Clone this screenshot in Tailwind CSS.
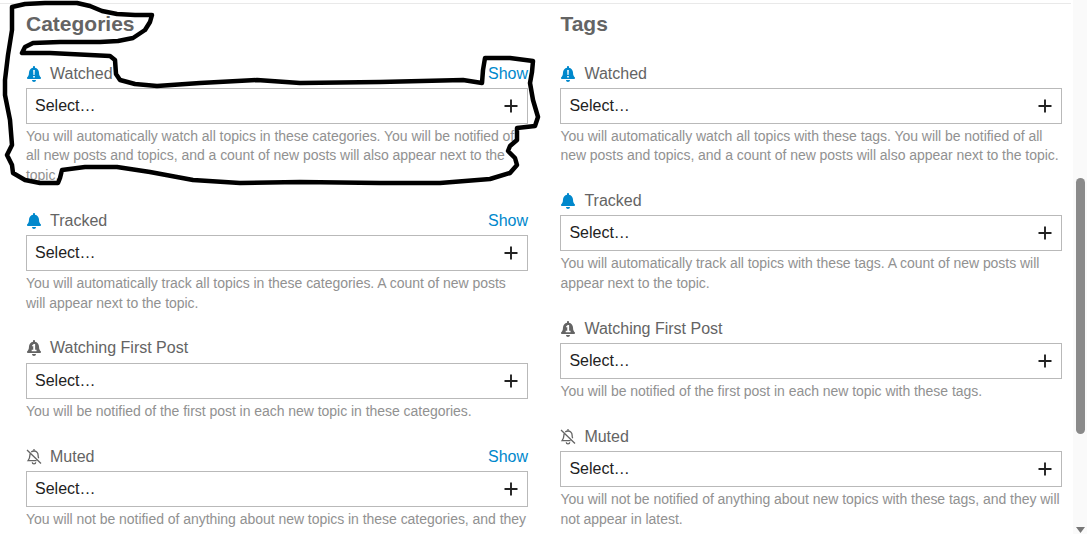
<!DOCTYPE html>
<html>
<head>
<meta charset="utf-8">
<script src="https://cdn.jsdelivr.net/npm/@tailwindcss/browser@4"></script>
</head>
<body class="bg-white font-['Liberation_Sans',Arial,sans-serif]">
<div class="relative flex h-[534px] w-[1087px] overflow-hidden">
  <svg class="hidden"><defs>
    <path id="bell" d="M224 512c35.320 0 63.970-28.650 63.970-64H160.030c0 35.350 28.650 64 63.970 64zm215.390-149.710c-19.320-20.760-55.470-51.990-55.470-154.290 0-77.700-54.480-139.900-127.940-155.160V32c0-17.670-14.320-32-31.980-32s-31.980 14.330-31.980 32v20.840C118.560 68.100 64.080 130.300 64.080 208c0 102.300-36.150 133.530-55.470 154.290-6 6.450-8.660 14.160-8.610 21.710.11 16.400 12.980 32 32.100 32h383.800c19.120 0 32-15.600 32.100-32 .05-7.550-2.610-15.270-8.610-21.710z"/>
    <path id="plus" d="M7 .5v13M.5 7h13"/>
  </defs></svg>
  <main class="min-w-0 flex-1 overflow-hidden">
    <div class="mt-[3px] h-px w-[1071px] bg-[#e9e9e9]"></div>
    <div class="flex gap-[32.4px] pl-[26px] pt-[8px]">
      <section class="w-[502px] shrink-0">
        <h2 class="h-[24px] text-[21px] font-bold leading-[24px] text-[#646464]">Categories</h2>
        <div class="mt-[26.6px]">
          <div class="mb-[24.2px]">
            <div class="flex h-[22.4px] items-center justify-between text-[16px] text-[#646464]"><span class="flex items-center"><svg class="mr-[9px] ml-[1px] h-[16px] w-[14px] text-[#0088cc]" viewBox="0 0 448 512" fill="currentColor"><use href="#bell"/><path d="M198 125h52l-8 165h-36zM198 320h52v50h-52z" fill="#fff"/></svg>Watched</span><span class="text-[#0088cc]">Show</span></div>
            <div class="mt-[2.8px] flex h-[36px] items-center justify-between border border-[#b9b9b9] px-[8px] text-[16px] text-[#222222]"><span>Select…</span><svg class="mr-[1px] h-[14px] w-[14px]" viewBox="0 0 14 14" fill="none" stroke="#222" stroke-width="1.900"><use href="#plus"/></svg></div>
            <p class="mt-[3px] text-[14px] leading-[19.6px] tracking-[-0.037px] text-[#919191]">You will automatically watch all topics in these categories. You will be notified of all new posts and topics, and a count of new posts will also appear next to the topic.</p>
          </div>
          <div class="mb-[24.2px]">
            <div class="flex h-[22.4px] items-center justify-between text-[16px] text-[#646464]"><span class="flex items-center"><svg class="mr-[9px] ml-[1px] h-[16px] w-[14px] text-[#0088cc]" viewBox="0 0 448 512" fill="currentColor"><use href="#bell"/></svg>Tracked</span><span class="text-[#0088cc]">Show</span></div>
            <div class="mt-[2.8px] flex h-[36px] items-center justify-between border border-[#b9b9b9] px-[8px] text-[16px] text-[#222222]"><span>Select…</span><svg class="mr-[1px] h-[14px] w-[14px]" viewBox="0 0 14 14" fill="none" stroke="#222" stroke-width="1.900"><use href="#plus"/></svg></div>
            <p class="mt-[3px] text-[14px] leading-[19.6px] tracking-[-0.037px] text-[#919191]">You will automatically track all topics in these categories. A count of new posts will appear next to the topic.</p>
          </div>
          <div class="mb-[24.2px]">
            <div class="flex h-[21.4px] items-center justify-between text-[16px] text-[#646464]"><span class="flex items-center"><svg class="mr-[9px] ml-[1px] h-[16px] w-[14px] text-[#646464]" viewBox="0 0 448 512" fill="currentColor"><use href="#bell"/><path d="M160 175l55-45h45v180h45v50H150v-50h50V195l-25 15z" fill="#fff"/></svg>Watching First Post</span></div>
            <div class="mt-[3.8px] flex h-[36px] items-center justify-between border border-[#b9b9b9] px-[8px] text-[16px] text-[#222222]"><span>Select…</span><svg class="mr-[1px] h-[14px] w-[14px]" viewBox="0 0 14 14" fill="none" stroke="#222" stroke-width="1.900"><use href="#plus"/></svg></div>
            <p class="mt-[3px] text-[14px] leading-[19.6px] tracking-[-0.037px] text-[#919191]">You will be notified of the first post in each new topic in these categories.</p>
          </div>
          <div>
            <div class="flex h-[23.2px] items-center justify-between text-[16px] text-[#646464]"><span class="flex items-center"><svg class="mr-[8px] h-[16px] w-[16px] text-[#646464]" viewBox="0 0 16 16" fill="none" stroke="currentColor" stroke-width="1.300"><path d="M4.300 4.600C4 5.100 3.900 5.600 3.900 6.300c0 2.700-.8 3.900-1.800 5.300h8.400M5.200 2.900C6 2.300 7 2 8 2c2.300 0 4.100 1.800 4.100 4.200 0 1.200.2 2.200.6 3M1 1l14 13.500M6.300 13.300c0 1 .8 1.600 1.700 1.600s1.700-.6 1.700-1.600M8 0v2"/></svg>Muted</span><span class="text-[#0088cc]">Show</span></div>
            <div class="mt-[2.6px] flex h-[36px] items-center justify-between border border-[#b9b9b9] px-[8px] text-[16px] text-[#222222]"><span>Select…</span><svg class="mr-[1px] h-[14px] w-[14px]" viewBox="0 0 14 14" fill="none" stroke="#222" stroke-width="1.900"><use href="#plus"/></svg></div>
            <p class="mt-[3px] h-[19.6px] overflow-hidden text-[14px] leading-[19.6px] tracking-[-0.037px] text-[#919191]">You will not be notified of anything about new topics in these categories, and they will not appear in latest.</p>
          </div>
        </div>
      </section>
      <section class="w-[502px] shrink-0">
        <h2 class="h-[24px] text-[21px] font-bold leading-[24px] text-[#646464]">Tags</h2>
        <div class="mt-[26.6px]">
          <div class="mb-[24.2px]">
            <div class="flex h-[22.4px] items-center text-[16px] text-[#646464]"><svg class="mr-[9px] ml-[1px] h-[16px] w-[14px] text-[#0088cc]" viewBox="0 0 448 512" fill="currentColor"><use href="#bell"/><path d="M198 125h52l-8 165h-36zM198 320h52v50h-52z" fill="#fff"/></svg>Watched</div>
            <div class="mt-[2.8px] flex h-[36px] items-center justify-between border border-[#b9b9b9] px-[8px] text-[16px] text-[#222222]"><span>Select…</span><svg class="mr-[1px] h-[14px] w-[14px]" viewBox="0 0 14 14" fill="none" stroke="#222" stroke-width="1.900"><use href="#plus"/></svg></div>
            <p class="mt-[3px] text-[14px] leading-[19.6px] tracking-[-0.037px] text-[#919191]">You will automatically watch all topics with these tags. You will be notified of all new posts and topics, and a count of new posts will also appear next to the topic.</p>
          </div>
          <div class="mb-[24.2px]">
            <div class="flex h-[22.4px] items-center text-[16px] text-[#646464]"><svg class="mr-[9px] ml-[1px] h-[16px] w-[14px] text-[#0088cc]" viewBox="0 0 448 512" fill="currentColor"><use href="#bell"/></svg>Tracked</div>
            <div class="mt-[2.8px] flex h-[36px] items-center justify-between border border-[#b9b9b9] px-[8px] text-[16px] text-[#222222]"><span>Select…</span><svg class="mr-[1px] h-[14px] w-[14px]" viewBox="0 0 14 14" fill="none" stroke="#222" stroke-width="1.900"><use href="#plus"/></svg></div>
            <p class="mt-[3px] text-[14px] leading-[19.6px] tracking-[-0.037px] text-[#919191]">You will automatically track all topics with these tags. A count of new posts will appear next to the topic.</p>
          </div>
          <div class="mb-[23.8px]">
            <div class="flex h-[22.4px] items-center text-[16px] text-[#646464]"><svg class="mr-[9px] ml-[1px] h-[16px] w-[14px] text-[#646464]" viewBox="0 0 448 512" fill="currentColor"><use href="#bell"/><path d="M160 175l55-45h45v180h45v50H150v-50h50V195l-25 15z" fill="#fff"/></svg>Watching First Post</div>
            <div class="mt-[2.8px] flex h-[36px] items-center justify-between border border-[#b9b9b9] px-[8px] text-[16px] text-[#222222]"><span>Select…</span><svg class="mr-[1px] h-[14px] w-[14px]" viewBox="0 0 14 14" fill="none" stroke="#222" stroke-width="1.900"><use href="#plus"/></svg></div>
            <p class="mt-[3.4px] text-[14px] leading-[19.6px] tracking-[-0.037px] text-[#919191]">You will be notified of the first post in each new topic with these tags.</p>
          </div>
          <div>
            <div class="flex h-[22.4px] items-center text-[16px] text-[#646464]"><svg class="mr-[8px] h-[16px] w-[16px] text-[#646464]" viewBox="0 0 16 16" fill="none" stroke="currentColor" stroke-width="1.300"><path d="M4.300 4.600C4 5.100 3.900 5.600 3.900 6.300c0 2.700-.8 3.900-1.800 5.300h8.400M5.200 2.900C6 2.300 7 2 8 2c2.300 0 4.100 1.800 4.100 4.200 0 1.200.2 2.200.6 3M1 1l14 13.500M6.300 13.300c0 1 .8 1.600 1.700 1.600s1.700-.6 1.700-1.600M8 0v2"/></svg>Muted</div>
            <div class="mt-[2.8px] flex h-[36px] items-center justify-between border border-[#b9b9b9] px-[8px] text-[16px] text-[#222222]"><span>Select…</span><svg class="mr-[1px] h-[14px] w-[14px]" viewBox="0 0 14 14" fill="none" stroke="#222" stroke-width="1.900"><use href="#plus"/></svg></div>
            <p class="mt-[3.4px] text-[14px] leading-[19.6px] tracking-[-0.037px] text-[#919191]">You will not be notified of anything about new topics with these tags, and they will not appear in latest.</p>
          </div>
        </div>
      </section>
    </div>
  </main>
  <aside class="flex w-[14px] shrink-0 flex-col items-start bg-[#fafafa] pl-[3px] pt-[178px]">
    <div class="h-[256px] w-[9px] rounded-full bg-[#8a8a8a]"></div>
    <svg class="mt-[93px] h-[6px] w-[9px]" viewBox="0 0 9 6"><path d="M0 0h9L4.500 6z" fill="#777"/></svg>
  </aside>
  <svg class="pointer-events-none absolute left-0 top-0" width="1087" height="534" fill="none" stroke="#000" stroke-width="4.500" stroke-linecap="round" stroke-linejoin="round"><polygon points="12,7 25,4 45,3 77,3 90,6 102,11 117,14 135,15 152,15 150,22 145,30 133,38 118,41 100,42 60,42 33,43 25,47 22,53 50,53 90,55 110,56 115,60 116,74 120,80 135,84 157,86 200,83 257,80 300,83 380,82 463,80 482,83 483,70 485,58 510,58 533,61 532,72 530,83 533,100 538,117 535,126 517,128 517,140 510,146 508,151 515,158 517,165 510,173 490,179 440,183 380,183 300,182 240,183 193,180 150,172 117,167 85,167 62,170 60,178 58,183 40,183 25,180 13,173 12,165 7,155 12,145 10,120 5,95 5,80 8,55 12,30"/></svg>
</div>
</body>
</html>
